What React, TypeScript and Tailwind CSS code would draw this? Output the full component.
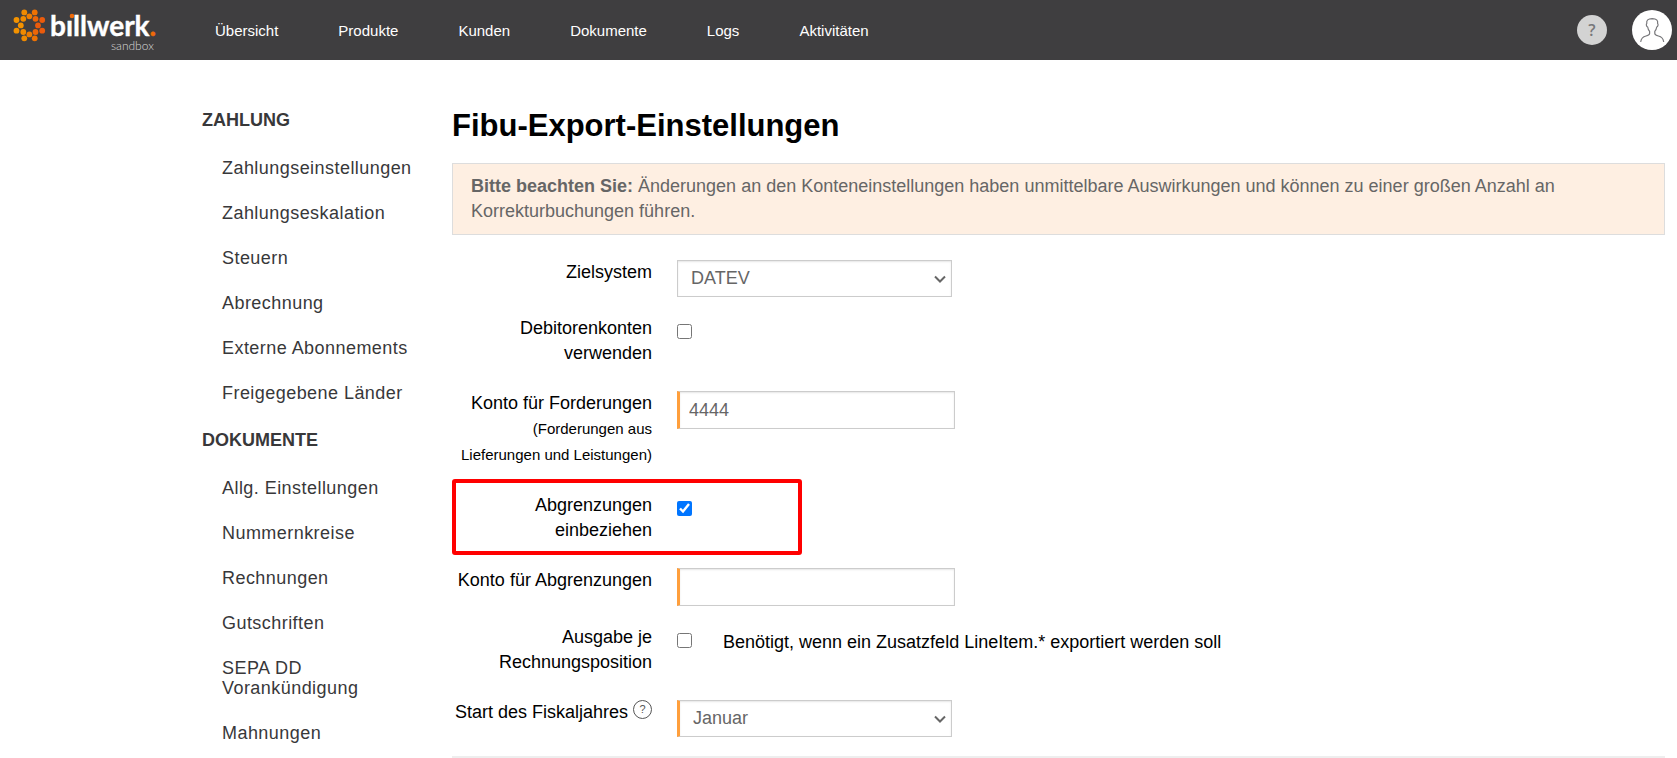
import React, { useState } from 'react';

const navItems = ['Übersicht', 'Produkte', 'Kunden', 'Dokumente', 'Logs', 'Aktivitäten'];

const sections = [
  {
    title: 'ZAHLUNG',
    items: [
      'Zahlungseinstellungen',
      'Zahlungseskalation',
      'Steuern',
      'Abrechnung',
      'Externe Abonnements',
      'Freigegebene Länder'
    ]
  },
  {
    title: 'DOKUMENTE',
    items: [
      'Allg. Einstellungen',
      'Nummernkreise',
      'Rechnungen',
      'Gutschriften',
      'SEPA DD Vorankündigung',
      'Mahnungen'
    ]
  }
];

const months = [
  'Januar', 'Februar', 'März', 'April', 'Mai', 'Juni',
  'Juli', 'August', 'September', 'Oktober', 'November', 'Dezember'
];

const dots = [
  [24.3, 12.4, '#f08a00'], [34.7, 12.4, '#ee7203'], [29.4, 16.3, '#ef7d00'],
  [16.5, 20, '#f39200'], [23.3, 18.8, '#f08a00'], [35.5, 18.8, '#ec6608'], [42.2, 20, '#ea5b0c'],
  [20.8, 25.4, '#f39200'], [38, 25.4, '#ea5b0c'],
  [16.5, 30.7, '#f39200'], [23.3, 32, '#f08a00'], [35.5, 32, '#ec6608'], [42.2, 30.7, '#ea5b0c'],
  [29.4, 34.4, '#ef7d00'], [24.3, 38.3, '#f08a00'], [34.7, 38.3, '#ee7203']
] as const;

const Logo: React.FC = () => (
  <svg width="160" height="60" viewBox="0 0 160 60" role="img" aria-label="billwerk sandbox">
    {dots.map(([x, y, color]) => (
      <circle key={`${x}-${y}`} cx={x} cy={y} r="2.9" fill={color} />
    ))}
    <text x="50" y="36" fontFamily="Lato, sans-serif" fontSize="28" fontWeight="700" fill="#fff" stroke="#fff" strokeWidth="0.4">
      bıllwerk
      <tspan fill="#ee6a0a" stroke="#ee6a0a">.</tspan>
    </text>
    <circle cx="72" cy="16" r="2.3" fill="#ee6a0a" />
    <text x="111" y="50" fontFamily="Lato, sans-serif" fontSize="12" fontWeight="300" fill="#dadada">
      sandbox
    </text>
  </svg>
);

const Avatar: React.FC = () => (
  <svg width="40" height="40" viewBox="0 0 40 40" fill="none" stroke="#77777a" strokeWidth="1.2" strokeLinecap="round" strokeLinejoin="round">
    <path d="M8.800 31.500c.4-3.600 2.500-4.800 5.200-5.500 2.300-.6 3.600-1.200 3.600-2.500v-2.200c-1.200-1.300-1.700-2.600-1.900-4.300-1.300-.3-1.800-3-.9-3.500-.6-3.300 1.200-4.700 5.400-4.900 4.200.2 6 1.600 5.400 4.900.9.500.4 3.200-.9 3.500-.2 1.700-.7 3-1.900 4.300v2.200c0 1.300 1.300 1.900 3.600 2.500 2.700.7 4.800 1.900 5.200 5.500" />
  </svg>
);

const Chevron: React.FC = () => (
  <svg
    className="pointer-events-none absolute right-[6px] top-1/2 -translate-y-1/2"
    width="12"
    height="8"
    viewBox="0 0 12 8"
    fill="none"
    stroke="#666"
    strokeWidth="2"
  >
    <path d="M1 1.500l5 5 5-5" />
  </svg>
);

type RowProps = {
  id: string;
  label: React.ReactNode;
  highlight?: boolean;
  children: React.ReactNode;
};

const Row: React.FC<RowProps> = ({ id, label, highlight, children }) => (
  <div className="relative flex items-start gap-[25px]">
    <label htmlFor={id} className="mb-[25px] w-[200px] shrink-0 text-right">
      {label}
    </label>
    <div className="mb-[19px] flex items-start">{children}</div>
    {highlight && (
      <div className="pointer-events-none absolute -top-[14px] left-0 h-[76px] w-[350px] rounded-[3px] border-4 border-[#ff0000]" />
    )}
  </div>
);

const App: React.FC = () => {
  const [target, setTarget] = useState('DATEV');
  const [useDebtors, setUseDebtors] = useState(false);
  const [receivables, setReceivables] = useState('4444');
  const [accruals, setAccruals] = useState(true);
  const [accrualAccount, setAccrualAccount] = useState('');
  const [perItem, setPerItem] = useState(false);
  const [month, setMonth] = useState('Januar');

  const inputClass =
    'h-[38px] w-[278px] border border-l-3 border-[#ccc] border-l-[#ff9f3c] bg-white px-[9px] text-[#666] shadow-[inset_0_1px_2px_rgba(0,0,0,0.1)] outline-none';
  const checkClass = 'mt-2 size-[15px] shrink-0';

  return (
    <div className="min-h-screen bg-white font-['Liberation_Sans',Arial,sans-serif] text-[18px] leading-[25px] text-black">
      <header className="flex h-[60px] items-center bg-[#3f3e40] pr-[5px]">
        <a href="#" className="shrink-0">
          <Logo />
        </a>
        <nav className="ml-[55px] flex flex-1 gap-[60px]">
          {navItems.map(item => (
            <a key={item} href="#" className="text-[15px] text-white">
              {item}
            </a>
          ))}
        </nav>
        <button
          type="button"
          aria-label="Hilfe"
          className="mr-[25px] size-[30px] rounded-full bg-[#d3d3d3] font-['Open_Sans',sans-serif] text-[16px] font-semibold text-[#77777a]"
        >
          ?
        </button>
        <button type="button" aria-label="Benutzerkonto" className="size-10 rounded-full bg-white">
          <Avatar />
        </button>
      </header>

      <div className="flex pl-[202px] pr-3">
        <aside className="w-[250px] shrink-0 pt-12 text-[#38383a]">
          {sections.map(section => (
            <section key={section.title} className="mb-[25px]">
              <h2 className="mb-[25px] font-bold">{section.title}</h2>
              <ul className="w-[220px] space-y-[25px] pl-5 leading-5 tracking-wide">
                {section.items.map(item => (
                  <li key={item}>
                    <a href="#">{item}</a>
                  </li>
                ))}
              </ul>
            </section>
          ))}
        </aside>

        <main className="min-w-0 flex-1 pt-[46px]">
          <h1 className="mb-[17px] text-[31px] font-bold leading-10">Fibu-Export-Einstellungen</h1>
          <div className="mb-[25px] border border-[#ddd] bg-[#feefe2] px-[18px] py-[10px] text-[#666]">
            <strong>Bitte beachten Sie:</strong> Änderungen an den Konteneinstellungen haben unmittelbare Auswirkungen
            und können zu einer großen Anzahl an Korrekturbuchungen führen.
          </div>

          <form className="border-b-2 border-[#eee]">
            <Row id="target" label="Zielsystem">
              <div className="relative">
                <select
                  id="target"
                  value={target}
                  onChange={e => setTarget(e.target.value)}
                  className="h-[37px] w-[275px] appearance-none border border-[#ccc] bg-white px-[13px] text-[#666] shadow-[inset_0_1px_2px_rgba(0,0,0,0.1)]"
                >
                  <option>DATEV</option>
                </select>
                <Chevron />
              </div>
            </Row>

            <Row id="debtors" label="Debitorenkonten verwenden">
              <input
                id="debtors"
                type="checkbox"
                className={checkClass}
                checked={useDebtors}
                onChange={e => setUseDebtors(e.target.checked)}
              />
            </Row>

            <Row
              id="receivables"
              label={
                <>
                  Konto für Forderungen
                  <span className="block text-[15px] leading-[26px]">(Forderungen aus Lieferungen und Leistungen)</span>
                </>
              }
            >
              <input
                id="receivables"
                type="text"
                className={inputClass}
                value={receivables}
                onChange={e => setReceivables(e.target.value)}
              />
            </Row>

            <Row id="accruals" label="Abgrenzungen einbeziehen" highlight>
              <input
                id="accruals"
                type="checkbox"
                className={checkClass}
                checked={accruals}
                onChange={e => setAccruals(e.target.checked)}
              />
            </Row>

            <Row id="accrualAccount" label="Konto für Abgrenzungen">
              <input
                id="accrualAccount"
                type="text"
                className={inputClass}
                value={accrualAccount}
                onChange={e => setAccrualAccount(e.target.value)}
              />
            </Row>

            <Row id="perItem" label="Ausgabe je Rechnungsposition">
              <input
                id="perItem"
                type="checkbox"
                className={checkClass}
                checked={perItem}
                onChange={e => setPerItem(e.target.checked)}
              />
              <p className="ml-[31px] mt-[5px]">Benötigt, wenn ein Zusatzfeld LineItem.* exportiert werden soll</p>
            </Row>

            <Row
              id="month"
              label={
                <span className="flex items-start justify-end gap-[5px] whitespace-nowrap">
                  Start des Fiskaljahres
                  <span className="flex size-[19px] items-center justify-center rounded-full border border-[#555] text-[11px] text-[#555]">
                    ?
                  </span>
                </span>
              }
            >
              <div className="relative">
                <select
                  id="month"
                  value={month}
                  onChange={e => setMonth(e.target.value)}
                  className="h-[37px] w-[275px] appearance-none border border-l-3 border-[#ccc] border-l-[#ff9f3c] bg-white px-[13px] text-[#666] shadow-[inset_0_1px_2px_rgba(0,0,0,0.1)]"
                >
                  {months.map(m => (
                    <option key={m}>{m}</option>
                  ))}
                </select>
                <Chevron />
              </div>
            </Row>
          </form>
        </main>
      </div>
    </div>
  );
};

export default App;
